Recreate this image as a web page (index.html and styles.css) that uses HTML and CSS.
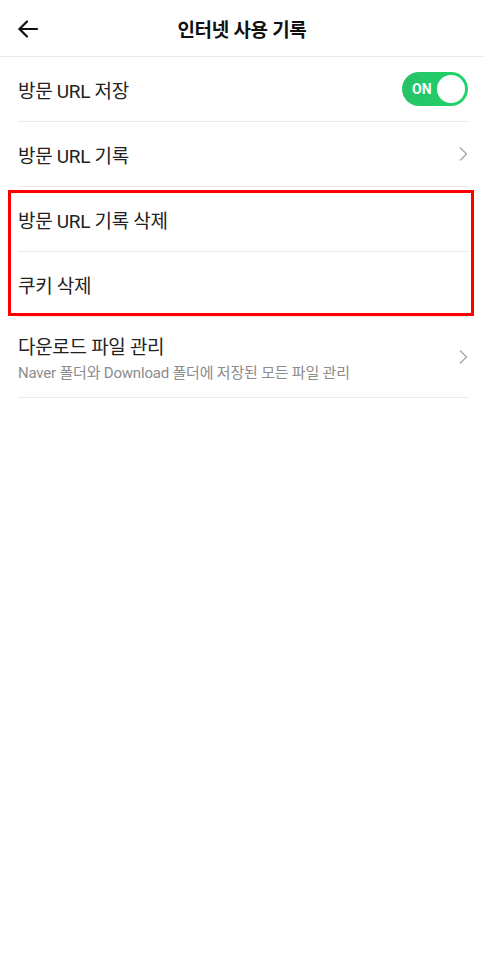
FILE: index.html
```html
<!DOCTYPE html>
<html>
<head>
    <title>인터넷 사용 기록</title>
    <link rel="stylesheet" href="styles.css">
</head>
<body>
    <div class="header">
        <button class="back-btn">
            <svg width="24" height="24" viewBox="0 0 24 24" fill="none" stroke="#111" stroke-width="2.2" stroke-linecap="round" stroke-linejoin="round">
                <path d="M21 12H3.5"/>
                <path d="M11 4.5L3.5 12L11 19.5"/>
            </svg>
        </button>
        <h1>인터넷 사용 기록</h1>
    </div>

    <div class="list">
        <div class="row">
            <span class="label">방문 URL 저장</span>
            <div class="toggle">
                <span class="toggle-text">ON</span>
                <span class="knob"></span>
            </div>
        </div>
        <div class="row">
            <span class="label">방문 URL 기록</span>
            <svg class="chevron" width="10" height="16" viewBox="0 0 10 16" fill="none" stroke="#a8a8a8" stroke-width="1.4">
                <path d="M2 1.5L8.5 8L2 14.5"/>
            </svg>
        </div>
        <div class="row">
            <span class="label">방문 URL 기록 삭제</span>
        </div>
        <div class="row">
            <span class="label">쿠키 삭제</span>
        </div>
        <div class="row row-tall">
            <div class="texts">
                <span class="label">다운로드 파일 관리</span>
                <span class="sub">Naver 폴더와 Download 폴더에 저장된 모든 파일 관리</span>
            </div>
            <svg class="chevron" width="10" height="16" viewBox="0 0 10 16" fill="none" stroke="#a8a8a8" stroke-width="1.4">
                <path d="M2 1.5L8.5 8L2 14.5"/>
            </svg>
        </div>
    </div>

    <!-- annotation box over delete rows -->
    <div class="highlight"></div>
</body>
</html>
```

FILE: styles.css
```css
body {
    font-family: "Roboto", "Noto Sans CJK KR", sans-serif;
    margin: 0;
    background: #fff;
    color: #222;
    position: relative;
}
.header {
    height: 56px;
    display: flex;
    align-items: center;
    justify-content: center;
    position: relative;
    border-bottom: 1px solid #ebebeb;
}
.back-btn {
    position: absolute;
    left: 16px;
    top: 17px;
    padding: 0;
    border: none;
    background: none;
    display: flex;
}
.header h1 {
    margin: 0;
    font-size: 19px;
    font-weight: 700;
    color: #111;
    letter-spacing: -0.3px;
}
.list {
    padding: 0 15px 0 18px;
}
.row {
    height: 64px;
    display: flex;
    align-items: center;
    justify-content: space-between;
    border-bottom: 1px solid #ebebeb;
}
.row-tall {
    height: 80px;
}
.label {
    font-size: 19px;
    color: #222;
    letter-spacing: -0.3px;
}
.texts {
    display: flex;
    flex-direction: column;
    gap: 2px;
}
.sub {
    font-size: 15px;
    color: #8c8c8c;
    letter-spacing: -0.2px;
}
.chevron {
    margin-right: 1px;
}
.toggle {
    width: 66px;
    height: 34px;
    border-radius: 17px;
    background: linear-gradient(90deg, #27c266, #1fd46a);
    display: flex;
    align-items: center;
    justify-content: space-between;
    padding: 0 3px 0 10px;
    box-sizing: border-box;
    margin-right: 1px;
}
.toggle-text {
    color: #fff;
    font-weight: 700;
    font-size: 14px;
}
.knob {
    width: 28px;
    height: 28px;
    border-radius: 50%;
    background: #fff;
}
.highlight {
    position: absolute;
    left: 8px;
    top: 190px;
    width: 460px;
    height: 120px;
    border: 3px solid #f00;
}
```
